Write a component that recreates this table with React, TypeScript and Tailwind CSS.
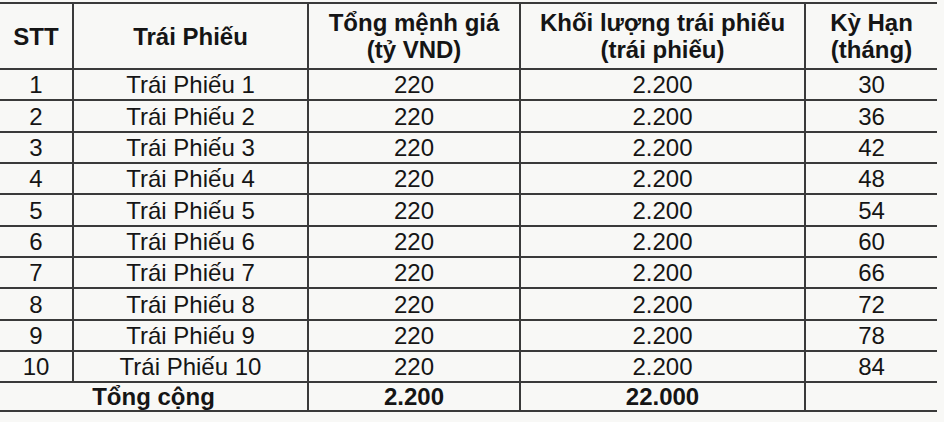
import React from "react";

const rows = [
  ["1", "Trái Phiếu 1", "220", "2.200", "30"],
  ["2", "Trái Phiếu 2", "220", "2.200", "36"],
  ["3", "Trái Phiếu 3", "220", "2.200", "42"],
  ["4", "Trái Phiếu 4", "220", "2.200", "48"],
  ["5", "Trái Phiếu 5", "220", "2.200", "54"],
  ["6", "Trái Phiếu 6", "220", "2.200", "60"],
  ["7", "Trái Phiếu 7", "220", "2.200", "66"],
  ["8", "Trái Phiếu 8", "220", "2.200", "72"],
  ["9", "Trái Phiếu 9", "220", "2.200", "78"],
  ["10", "Trái Phiếu 10", "220", "2.200", "84"],
];

export default function App() {
  const cell = "border-b-2 border-r-2 border-[#3a3a3a] text-center align-middle p-0";
  const last = "border-b-2 border-[#3a3a3a] text-center align-middle p-0";
  return (
    <div
      className="w-[944px] h-[422px] bg-[#f8f8f6] text-[#151515] pt-[2px] overflow-hidden"
      style={{ fontFamily: '"Liberation Sans", Arial, sans-serif' }}
    >
      <table className="border-collapse w-[937px] table-fixed text-[24px] leading-[27px]">
        <colgroup>
          <col className="w-[73px]" />
          <col className="w-[235px]" />
          <col className="w-[212px]" />
          <col className="w-[285px]" />
          <col className="w-[132px]" />
        </colgroup>
        <thead>
          <tr className="h-[66px] font-bold">
            <th className={cell + " border-t-2"}>STT</th>
            <th className={cell + " border-t-2"}>Trái Phiếu</th>
            <th className={cell + " border-t-2"}>
              Tổng mệnh giá
              <br />
              (tỷ VND)
            </th>
            <th className={cell + " border-t-2"}>
              Khối lượng trái phiếu
              <br />
              (trái phiếu)
            </th>
            <th className={last + " border-t-2"}>
              Kỳ Hạn
              <br />
              (tháng)
            </th>
          </tr>
        </thead>
        <tbody>
          {rows.map((r, i) => (
            <tr key={i} className={i % 3 === 1 ? "h-[32px]" : "h-[31px]"}>
              <td className={cell}>{r[0]}</td>
              <td className={cell}>{r[1]}</td>
              <td className={cell}>{r[2]}</td>
              <td className={cell}>{r[3]}</td>
              <td className={last}>{r[4]}</td>
            </tr>
          ))}
          <tr className="h-[27px] font-bold">
            <td className={cell} colSpan={2}>
              Tổng cộng
            </td>
            <td className={cell}>2.200</td>
            <td className={cell}>22.000</td>
            <td className={last}></td>
          </tr>
        </tbody>
      </table>
    </div>
  );
}
